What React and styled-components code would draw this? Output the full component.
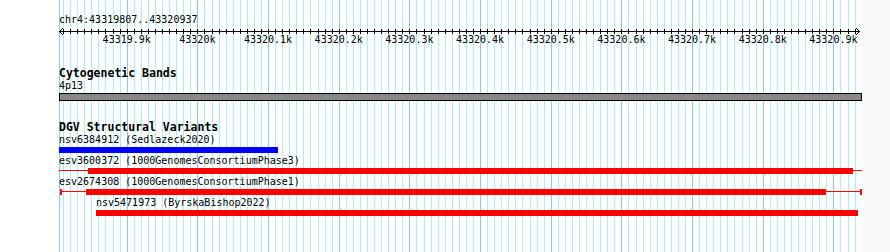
import React from "react";
import styled, { createGlobalStyle } from "styled-components";

const GlobalStyle = createGlobalStyle`
  html, body {
    margin: 0;
    padding: 0;
    background: #ffffff;
  }
  body {
    font-family: "DejaVu Sans Mono", "Liberation Mono", monospace;
    color: #000;
  }
`;

// layout of the view, in px relative to the track area
const TRACK_W = 803;
const FIRST_MAJOR = 67.7; // 43319.9k
const STEP = 7.067; // 10 bp

const gridLines = [];
for (let j = -9; j <= 103; j++) {
  gridLines.push({ x: Math.round(FIRST_MAJOR + STEP * j) + 0.5, major: j % 10 === 0 });
}

const majorLabels = [];
for (let k = 0; k <= 10; k++) {
  const v = 43319.9 + k * 0.1;
  const txt = Math.abs(v - 43320) < 0.001 ? "43320k" : v.toFixed(1) + "k";
  majorLabels.push({ x: FIRST_MAJOR + STEP * 10 * k, txt });
}

const Page = styled.div`
  display: flex;
  width: 890px;
  height: 252px;
  overflow: hidden;
`;

const Gutter = styled.div`
  width: 59px;
  flex: none;
  background: #ffffff;
`;

const Browser = styled.div`
  position: relative;
  width: ${TRACK_W}px;
  flex: none;
  background: #ffffff;
`;

const Outside = styled.div`
  flex: 1;
  background: #f9fdf9;
`;

const Grid = styled.svg`
  position: absolute;
  left: 0;
  top: 0;
  width: ${TRACK_W}px;
  height: 252px;
  pointer-events: none;
`;

const Content = styled.div`
  position: relative;
  display: flex;
  flex-direction: column;
`;

const RegionLabel = styled.div`
  margin-top: 14px;
  height: 12px;
  font-size: 10px;
  line-height: 12px;
  white-space: nowrap;
`;

const Axis = styled.svg`
  display: block;
  width: ${TRACK_W}px;
  height: 22px;
  font-family: "DejaVu Sans Mono", "Liberation Mono", monospace;
  font-size: 10px;
`;

const TrackTitle = styled.div`
  margin-top: ${(p) => p.$gap}px;
  height: 13px;
  font-size: 11.5px;
  line-height: 13px;
  font-weight: bold;
  white-space: nowrap;
`;

const SubLabel = styled.div`
  height: 12px;
  font-size: 10px;
  line-height: 12px;
`;

const Band = styled.div`
  margin-top: 1px;
  height: 8px;
  box-sizing: border-box;
  border: 1px solid #000;
  background: #888888;
`;

const FeatureRow = styled.div`
  position: relative;
  height: 21px;
`;

const FeatureName = styled.div`
  position: absolute;
  top: 0;
  left: ${(p) => p.$x}px;
  height: 12px;
  font-size: 10px;
  line-height: 12px;
  white-space: nowrap;
`;

const Thick = styled.div`
  position: absolute;
  top: 13px;
  height: 6px;
  background: ${(p) => p.$color};
`;

const Thin = styled.div`
  position: absolute;
  top: 15px;
  height: 1px;
  background: ${(p) => p.$color};
`;

const EndTick = styled.div`
  position: absolute;
  top: 13px;
  width: 2px;
  height: 6px;
  background: ${(p) => p.$color};
`;

const features = [
  { name: "nsv6384912 (Sedlazeck2020)", color: "#0000ff", start: 0, end: 219, thick: [0, 219] },
  { name: "esv3600372 (1000GenomesConsortiumPhase3)", color: "#ff0000", start: 0, end: 803, thick: [29, 794], line: true },
  { name: "esv2674308 (1000GenomesConsortiumPhase1)", color: "#ff0000", start: 1, end: 803, thick: [27, 767], line: true, ticks: true },
  { name: "nsv5471973 (ByrskaBishop2022)", color: "#ff0000", start: 37, end: 799, thick: [37, 799] },
];

const Feature = ({ f }) => (
  <FeatureRow>
    <FeatureName $x={f.start === 1 ? 0 : f.start}>{f.name}</FeatureName>
    {f.line && (
      <Thin $color={f.color} style={{ left: f.start, width: f.end - f.start }} />
    )}
    {f.ticks && (
      <>
        <EndTick $color={f.color} style={{ left: f.start }} />
        <EndTick $color={f.color} style={{ left: f.end - 2 }} />
      </>
    )}
    <Thick $color={f.color} style={{ left: f.thick[0], width: f.thick[1] - f.thick[0] }} />
  </FeatureRow>
);

const App = () => {
  return (
    <Page>
      <GlobalStyle />
      <Gutter />
      <Browser>
        <Grid viewBox={`0 0 ${TRACK_W} 252`}>
          <line x1="0.5" y1="0" x2="0.5" y2="252" stroke="#88c8ee" />
          {gridLines.map((g, i) => (
            <line key={i} x1={g.x} y1="0" x2={g.x} y2="252" stroke={g.major ? "#88c8ee" : "#aaeeee"} />
          ))}
        </Grid>
        <Content>
          <RegionLabel>chr4:43319807..43320937</RegionLabel>
          <Axis viewBox={`0 0 ${TRACK_W} 22`}>
            <line x1="0" y1="5.5" x2="801" y2="5.5" stroke="#000" />
            <polyline points="4,2 0.5,5.5 4,9" fill="none" stroke="#000" />
            <polyline points="797,2 800.5,5.5 797,9" fill="none" stroke="#000" />
            {gridLines.map((g, i) => (
              <line key={i} x1={g.x} y1="3" x2={g.x} y2="8" stroke="#000" />
            ))}
            {majorLabels.map((l) => (
              <text key={l.txt} x={l.x} y="16.5" textAnchor="middle" fill="#000">
                {l.txt}
              </text>
            ))}
          </Axis>

          <TrackTitle $gap={19}>Cytogenetic Bands</TrackTitle>
          <SubLabel>4p13</SubLabel>
          <Band />

          <TrackTitle $gap={20}>DGV Structural Variants</TrackTitle>
          {features.map((f) => (
            <Feature key={f.name} f={f} />
          ))}
        </Content>
      </Browser>
      <Outside />
    </Page>
  );
};

export default App;
